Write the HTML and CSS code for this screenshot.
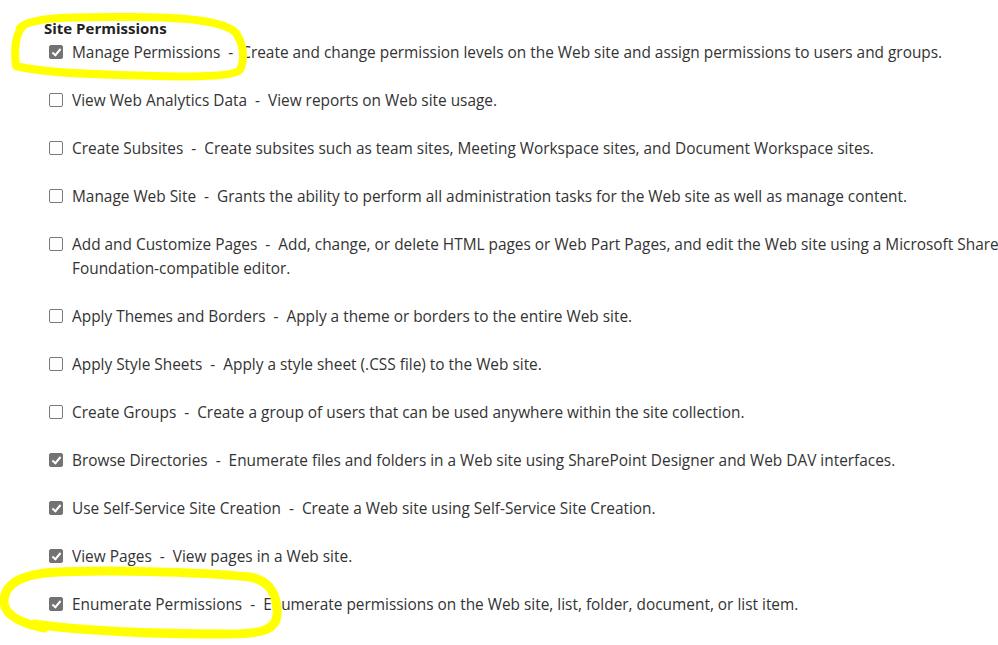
FILE: index.html
```html
<!DOCTYPE html>
<html lang="en">
<head>
    <meta charset="UTF-8">
    <meta name="viewport" content="width=device-width, initial-scale=1.0">
    <title>Site Permissions</title>
    <link rel="stylesheet" href="styles.css">
</head>
<body>
    <div class="page">
        <h3 class="group-title">Site Permissions</h3>
        <ul class="perm-list">
            <li class="perm">
                <span class="box checked"></span>
                <span class="perm-text">Manage Permissions&nbsp; -&nbsp; Create and change permission levels on the Web site and assign permissions to users and groups.</span>
            </li>
            <li class="perm">
                <span class="box"></span>
                <span class="perm-text">View Web Analytics Data&nbsp; -&nbsp; View reports on Web site usage.</span>
            </li>
            <li class="perm">
                <span class="box"></span>
                <span class="perm-text">Create Subsites&nbsp; -&nbsp; Create subsites such as team sites, Meeting Workspace sites, and Document Workspace sites.</span>
            </li>
            <li class="perm">
                <span class="box"></span>
                <span class="perm-text">Manage Web Site&nbsp; -&nbsp; Grants the ability to perform all administration tasks for the Web site as well as manage content.</span>
            </li>
            <li class="perm">
                <span class="box"></span>
                <span class="perm-text">Add and Customize Pages&nbsp; -&nbsp; Add, change, or delete HTML pages or Web Part Pages, and edit the Web site using a Microsoft SharePoint Foundation-compatible editor.</span>
            </li>
            <li class="perm">
                <span class="box"></span>
                <span class="perm-text">Apply Themes and Borders&nbsp; -&nbsp; Apply a theme or borders to the entire Web site.</span>
            </li>
            <li class="perm">
                <span class="box"></span>
                <span class="perm-text">Apply Style Sheets&nbsp; -&nbsp; Apply a style sheet (.CSS file) to the Web site.</span>
            </li>
            <li class="perm">
                <span class="box"></span>
                <span class="perm-text">Create Groups&nbsp; -&nbsp; Create a group of users that can be used anywhere within the site collection.</span>
            </li>
            <li class="perm">
                <span class="box checked"></span>
                <span class="perm-text">Browse Directories&nbsp; -&nbsp; Enumerate files and folders in a Web site using SharePoint Designer and Web DAV interfaces.</span>
            </li>
            <li class="perm">
                <span class="box checked"></span>
                <span class="perm-text">Use Self-Service Site Creation&nbsp; -&nbsp; Create a Web site using Self-Service Site Creation.</span>
            </li>
            <li class="perm">
                <span class="box checked"></span>
                <span class="perm-text">View Pages&nbsp; -&nbsp; View pages in a Web site.</span>
            </li>
            <li class="perm">
                <span class="box checked"></span>
                <span class="perm-text">Enumerate Permissions&nbsp; -&nbsp; Enumerate permissions on the Web site, list, folder, document, or list item.</span>
            </li>
            <li class="perm">
                <span class="box checked"></span>
                <span class="perm-text">Browse User Information&nbsp; -&nbsp; View information about users of the Web site.</span>
            </li>
        </ul>
    </div>

    <!-- highlighter marks drawn over the screenshot -->
    <svg class="marks" width="998" height="645" viewBox="0 0 998 645">
        <path d="M20,28 C32,16 80,17 130,17 C180,17 224,20 236,33 C244,45 245,60 240,70 C232,78 180,77 120,75 C80,74 40,72 16,66 C14,50 15,36 22,27" />
        <path class="thick" d="M44,628 C20,623 3,615 4,600 C5,585 20,576 45,573 C100,569 200,572 250,577 C271,581 278,596 277,615 C276,630 260,634 230,634 C160,634 90,632 34,624" />
    </svg>
</body>
</html>
```

FILE: styles.css
```css
html, body {
    margin: 0;
    padding: 0;
    overflow: hidden;
    background: #fff;
}
body {
    font-family: "Open Sans", "Noto Sans", Arial, sans-serif;
    font-size: 15.4px;
    color: #333;
    width: 998px;
    height: 645px;
    position: relative;
}
.page {
    width: 1060px;
    padding-left: 44px;
    margin-top: 16px;
}
.group-title {
    margin: 0 0 1px 0;
    font-size: 15px;
    font-weight: bold;
    line-height: 24px;
    color: #222;
}
.perm-list {
    list-style: none;
    margin: 0;
    padding: 0 0 0 5px;
}
.perm {
    display: flex;
    align-items: flex-start;
    line-height: 24px;
    margin-bottom: 24px;
}
.box {
    flex: none;
    box-sizing: border-box;
    width: 14px;
    height: 14px;
    margin-top: 4px;
    margin-right: 9px;
    border: 1px solid #7a7a7a;
    border-radius: 2px;
    background: #fff;
    position: relative;
}
.box.checked {
    background: #737373;
    border-color: #737373;
}
.box.checked::after {
    content: "";
    position: absolute;
    left: 4px;
    top: 1px;
    width: 3px;
    height: 7px;
    border: solid #fff;
    border-width: 0 2px 2px 0;
    transform: rotate(40deg);
}
.perm-text {
    white-space: normal;
}
.marks {
    position: absolute;
    left: 0;
    top: 0;
    pointer-events: none;
}
.marks path {
    fill: none;
    stroke: #ffff00;
    stroke-width: 8;
    stroke-linecap: round;
    stroke-linejoin: round;
}
.marks .thick {
    stroke-width: 9;
}
```
